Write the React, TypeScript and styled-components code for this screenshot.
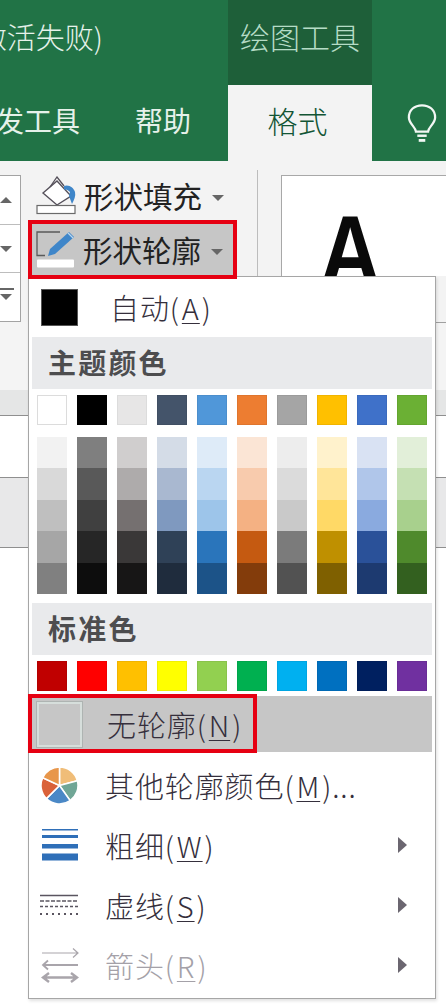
import React from 'react';
import styled, { createGlobalStyle } from 'styled-components';

const Global = createGlobalStyle`
  html, body { margin: 0; padding: 0; background: #fff; }
  * { box-sizing: border-box; }
`;

const Page = styled.div`
  position: relative;
  width: 446px;
  height: 1008px;
  overflow: hidden;
  background: #fff;
  font-family: "Noto Sans CJK SC", "Liberation Sans", sans-serif;
`;

const TitleBar = styled.div`
  display: flex;
  height: 85px;
  background: #217346;
`;

const TitleLeft = styled.div`
  width: 228px;
  display: flex;
  justify-content: flex-end;
  align-items: center;
  padding: 0 125px 13px 0;
  overflow: hidden;
  white-space: nowrap;
  font-size: 29px;
  font-weight: 300;
  color: #e6f2eb;
`;

const ContextTab = styled.div`
  width: 144px;
  display: flex;
  justify-content: center;
  align-items: center;
  padding-bottom: 13px;
  background: #1e5f39;
  font-size: 30px;
  font-weight: 300;
  color: #b5dcc6;
  white-space: nowrap;
`;

const TabBar = styled.div`
  display: flex;
  height: 76px;
  background: #217346;
`;

const TabGroup = styled.div`
  width: 228px;
  display: flex;
  justify-content: flex-end;
  align-items: center;
  gap: 55px;
  padding: 0 37px 6px 0;
  overflow: hidden;
  white-space: nowrap;
`;

const TabLabel = styled.span`
  font-size: 28px;
  color: #e6f1ea;
  flex: none;
`;

const ActiveTab = styled.div`
  width: 144px;
  display: flex;
  justify-content: center;
  align-items: center;
  padding: 0 5px 6px 0;
  background: #f3f3f3;
  font-size: 30px;
  font-weight: 300;
  color: #125535;
`;

const BulbSlot = styled.div`
  flex: 1;
  display: flex;
  justify-content: center;
  align-items: center;
  padding: 1px 0 0 25px;
`;

const Ribbon = styled.div`
  display: flex;
  height: 161px;
  background: #f3f3f3;
`;

const Gallery = styled.div`
  width: 21px;
  height: 147px;
  margin-top: 14px;
  flex: none;
  display: flex;
  flex-direction: column;
  background: #fff;
  border: solid #a3a3a3;
  border-width: 1px 1px 1px 0;
`;

const GalleryCell = styled.div<{ $last?: boolean }>`
  flex: 1;
  display: flex;
  align-items: center;
  justify-content: flex-start;
  border-bottom: ${(p) => (p.$last ? 'none' : '1px solid #bdbdbd')};
`;

const ShapeColumn = styled.div`
  width: 209px;
  margin-left: 7px;
  padding-top: 11px;
  flex: none;
  display: flex;
  flex-direction: column;
`;

const ShapeButton = styled.div<{ $active?: boolean }>`
  position: relative;
  z-index: 3;
  flex: none;
  display: flex;
  align-items: center;
  height: ${(p) => (p.$active ? '59px' : '48px')};
  padding-left: ${(p) => (p.$active ? '3px' : '8px')};
  background: ${(p) => (p.$active ? '#c6c6c6' : 'transparent')};
  border: ${(p) => (p.$active ? '4px solid #e60012' : 'none')};
`;

const ShapeLabel = styled.span`
  font-size: 29.5px;
  line-height: 1;
  color: #222;
  margin-left: 6px;
  white-space: nowrap;
`;

const Caret = styled.span`
  width: 0;
  height: 0;
  margin-left: 10px;
  margin-top: 4px;
  border-left: 6px solid transparent;
  border-right: 6px solid transparent;
  border-top: 6px solid #666;
`;

const Separator = styled.div`
  width: 1px;
  height: 106px;
  margin: 9px 23px 0 20px;
  background: #bcbcbc;
  flex: none;
`;

const Preview = styled.div`
  flex: 1;
  height: 101px;
  margin-top: 14px;
  overflow: hidden;
  background: #fff;
  border: solid #a8a8a8;
  border-width: 1px 0 0 1px;
  display: flex;
  justify-content: flex-start;
  padding-left: 32px;
`;

const PreviewGlyph = styled.span`
  display: inline-block;
  font-family: "Liberation Sans", sans-serif;
  font-size: 100px;
  font-weight: 700;
  line-height: 1;
  margin-top: 25px;
  height: 100px;
  color: #0a0a0a;
  transform: scaleX(0.85);
`;

const Strip = styled.div<{ $h: number; $bg: string; $line?: boolean; $edge?: boolean }>`
  position: relative;
  height: ${(p) => p.$h}px;
  background: ${(p) => p.$bg};
  border-bottom: ${(p) => (p.$line ? '1px solid #8f8f8f' : 'none')};
  ${(p) =>
    p.$edge
      ? `&::before { content: ''; position: absolute; top: 0; right: 0; width: 12px; height: 1px; background: #a0a0a0; }`
      : ''}
`;

const Menu = styled.div`
  position: absolute;
  z-index: 2;
  left: 28px;
  top: 276px;
  width: 408px;
  height: 723px;
  display: flex;
  flex-direction: column;
  padding: 0 3px;
  background: #fff;
  border: 1px solid #a6a6a6;
  box-shadow: 1px 2px 3px rgba(0, 0, 0, 0.12);
`;

const Row = styled.div<{ $h?: number; $muted?: boolean; $hot?: boolean; $top?: number }>`
  position: relative;
  flex: none;
  display: flex;
  align-items: center;
  height: ${(p) => p.$h ?? 60}px;
  margin-top: ${(p) => p.$top ?? 0}px;
  padding-right: 25px;
  background: ${(p) => (p.$hot ? '#c6c6c6' : 'transparent')};
  color: ${(p) => (p.$muted ? '#a4a1a8' : '#352f3c')};
  font-size: 29px;
  font-weight: 300;
  white-space: nowrap;
`;

const IconSlot = styled.div<{ $w?: number }>`
  width: ${(p) => p.$w ?? 73}px;
  flex: none;
  display: flex;
  align-items: center;
  padding-left: 8px;
`;

const AutoSwatch = styled.div`
  width: 37px;
  height: 37px;
  margin-left: 1px;
  background: #000;
  border: 1px solid #555;
`;

const EmptySwatch = styled.div`
  width: 45px;
  height: 45px;
  margin-left: -3px;
  background: #c6c6c6;
  border: 2px solid #d6dedb;
  outline: 1px solid #aeb4b2;
`;

const Label = styled.span`
  letter-spacing: 0.9px;
  line-height: 1;
  & > u {
    padding: 0 2px;
    text-underline-offset: 3px;
    text-decoration-thickness: 1px;
  }
`;

const SubArrow = styled.span`
  margin-left: auto;
  width: 0;
  height: 0;
  border-top: 8px solid transparent;
  border-bottom: 8px solid transparent;
  border-left: 9px solid #6b6670;
`;

const Header = styled.div<{ $top?: number }>`
  flex: none;
  height: 52px;
  margin-top: ${(p) => p.$top ?? 0}px;
  display: flex;
  align-items: center;
  padding: 0 0 3px 16px;
  background: #e9eaec;
  color: #4d4d4f;
  font-size: 28px;
  font-weight: 700;
  letter-spacing: 2.2px;
`;

const SwatchRow = styled.div<{ $top: number; $h: number }>`
  flex: none;
  display: grid;
  grid-template-columns: repeat(10, 30px);
  column-gap: 10px;
  height: ${(p) => p.$h}px;
  margin-top: ${(p) => p.$top}px;
  padding-left: 5px;
`;

const Swatch = styled.div<{ $c: string; $ring?: boolean }>`
  background: ${(p) => p.$c};
  border: 1px solid ${(p) => (p.$ring ? '#dcdcdc' : 'rgba(0,0,0,0.06)')};
`;

const TintColumn = styled.div`
  display: flex;
  flex-direction: column;
`;

const Tint = styled.div<{ $c: string }>`
  flex: 1;
  background: ${(p) => p.$c};
`;

const RedFrame = styled.div`
  position: absolute;
  left: -4px;
  top: -2px;
  width: 229px;
  height: 59px;
  border: 4px solid #e60012;
  pointer-events: none;
`;

const Nudge = styled.div`
  display: flex;
  margin-left: 2px;
`;

const theme = [
  ['#ffffff', true], ['#000000'], ['#e7e6e6', true], ['#44546a'], ['#5097d9'],
  ['#ed7d31'], ['#a5a5a5'], ['#ffc000'], ['#3f71c9'], ['#6bb034'],
] as [string, boolean?][];

const tints = [
  ['#f2f2f2', '#d9d9d9', '#bfbfbf', '#a6a6a6', '#808080'],
  ['#7f7f7f', '#595959', '#404040', '#262626', '#0d0d0d'],
  ['#d0cece', '#aeabab', '#757070', '#3a3838', '#171616'],
  ['#d4dce7', '#a9b8d0', '#7f99bf', '#2f4157', '#1f2c3d'],
  ['#deebf8', '#bad6f1', '#9dc5ea', '#2a75bb', '#1c5388'],
  ['#fbe5d5', '#f8cbad', '#f4b183', '#c55a11', '#833c0b'],
  ['#ededed', '#dbdbdb', '#c9c9c9', '#7b7b7b', '#525252'],
  ['#fff2cc', '#ffe599', '#ffd966', '#bf9000', '#7f6000'],
  ['#d9e2f3', '#b0c6ea', '#8aaadf', '#2a5199', '#1d3a70'],
  ['#e2efd9', '#c5e0b3', '#a8d08d', '#4f8a2c', '#33601f'],
];

const standard = ['#c00000', '#ff0000', '#ffc000', '#ffff00', '#92d050', '#00b050', '#00b0f0', '#0070c0', '#002060', '#7030a0'];

const Bulb = () => (
  <svg width="30" height="42" viewBox="0 0 32 44" fill="none" stroke="#f2f7f4" strokeWidth="2.4">
    <path d="M9.5 30 C9 25 2 21.5 2 15 C2 7 8 2 16 2 C24 2 30 7 30 15 C30 21.5 23 25 22.5 30 Z" />
    <path d="M11 34.5 H21" strokeWidth="2.6" />
    <path d="M12.5 39.5 H19.5" strokeWidth="3" />
  </svg>
);

const FillIcon = () => (
  <svg width="42" height="40" viewBox="0 0 42 40" fill="none">
    <path d="M7 17 L21 5 L35 20 L21 29 Z" fill="#fff" stroke="#55505a" strokeWidth="1.4" />
    <path d="M14 11 L21 1 L28 10" stroke="#55505a" strokeWidth="1.3" />
    <path d="M28 10 C33 8 38 12 39 16 C40 20 38 24 36 28 L33 20 L34 16 C32 14 30 13 28 14 Z" fill="#3f86c9" />
    <rect x="1" y="29.5" width="38" height="8" fill="#fff" stroke="#6a6a6a" strokeWidth="1.2" />
  </svg>
);

const PenIcon = () => (
  <svg width="42" height="40" viewBox="0 0 42 40" fill="none">
    <path d="M25 2 H2 V25.5 H10" stroke="#5a5a5a" strokeWidth="1.3" />
    <path d="M13 26 L15 19 L34 2 L39 7 L20 24 Z" fill="#3f86c9" />
    <path d="M33 3 L38 8" stroke="#bcd7ee" strokeWidth="1.2" />
    <rect x="2" y="29.5" width="37" height="8" rx="1" fill="#fff" />
  </svg>
);

const wedge = (a: number, b: number) => {
  const r = 19;
  const p = (d: number) => {
    const t = ((d - 90) * Math.PI) / 180;
    return `${20 + r * Math.cos(t)} ${20 + r * Math.sin(t)}`;
  };
  return `M20 20 L${p(a)} A${r} ${r} 0 0 1 ${p(b)} Z`;
};

const PieIcon = () => (
  <svg width="39" height="39" viewBox="0 0 40 40" stroke="#fff" strokeWidth="1.6">
    <path d={wedge(0, 75)} fill="#f0bd78" />
    <path d={wedge(75, 145)} fill="#70a696" />
    <path d={wedge(145, 225)} fill="#4a88c6" />
    <path d={wedge(225, 295)} fill="#da623a" />
    <path d={wedge(295, 360)} fill="#e8964a" />
  </svg>
);

const WeightIcon = () => (
  <svg width="36" height="32" viewBox="0 0 36 32" fill="#2f6fb8">
    <rect x="0" y="0" width="36" height="1.5" />
    <rect x="0" y="6" width="36" height="3" />
    <rect x="0" y="15" width="36" height="4.5" />
    <rect x="0" y="24.5" width="36" height="7" />
  </svg>
);

const DashIcon = () => (
  <svg width="38" height="22" viewBox="0 0 38 22" fill="none" stroke="#5a5560" strokeWidth="1.4">
    <path d="M0 1.5 H38" />
    <path d="M0 7 H38" strokeDasharray="4 1.5" />
    <path d="M0 12.5 H38" strokeDasharray="3 2" />
    <path d="M0 20 H38" strokeWidth="2" strokeDasharray="2 4" />
  </svg>
);

const ArrowsIcon = () => (
  <svg width="40" height="36" viewBox="0 0 40 36" fill="none" stroke="#a9a5ab">
    <path d="M2 6 H38 M33 1.5 L38 6 L33 10.5" strokeWidth="1.2" />
    <path d="M38 18 H3 M8 13.5 L3 18 L8 22.5" strokeWidth="1.8" />
    <path d="M4 30.5 H36 M9 26 L3 30.5 L9 35 M31 26 L37 30.5 L31 35" strokeWidth="2.4" />
  </svg>
);

const Tri = styled.span<{ $down?: boolean; $bar?: boolean }>`
  position: relative;
  width: 0;
  height: 0;
  border-left: 6px solid transparent;
  border-right: 6px solid transparent;
  ${(p) => (p.$down ? 'border-top: 6px solid #666;' : 'border-bottom: 6px solid #666;')}
  ${(p) =>
    p.$bar
      ? `&::before { content: ''; position: absolute; left: -6px; top: -12px; width: 14px; height: 2px; background: #666; }`
      : ''}
`;

export default function App() {
  return (
    <Page>
      <Global />
      <TitleBar>
        <TitleLeft>(激活失败)</TitleLeft>
        <ContextTab>绘图工具</ContextTab>
      </TitleBar>
      <TabBar>
        <TabGroup>
          <TabLabel>开发工具</TabLabel>
          <TabLabel>帮助</TabLabel>
        </TabGroup>
        <ActiveTab>格式</ActiveTab>
        <BulbSlot>
          <Bulb />
        </BulbSlot>
      </TabBar>
      <Ribbon>
        <Gallery>
          <GalleryCell><Tri /></GalleryCell>
          <GalleryCell><Tri $down /></GalleryCell>
          <GalleryCell $last><Tri $down $bar /></GalleryCell>
        </Gallery>
        <ShapeColumn>
          <ShapeButton>
            <FillIcon />
            <ShapeLabel>形状填充</ShapeLabel>
            <Caret />
          </ShapeButton>
          <ShapeButton $active>
            <PenIcon />
            <ShapeLabel>形状轮廓</ShapeLabel>
            <Caret />
          </ShapeButton>
        </ShapeColumn>
        <Separator />
        <Preview>
          <PreviewGlyph>A</PreviewGlyph>
        </Preview>
      </Ribbon>
      <Strip $h={68} $bg="#f4f4f4" $edge />
      <Strip $h={26} $bg="#e5e6e6" $line />
      <Strip $h={62} $bg="#ffffff" $line />
      <Strip $h={70} $bg="#e8e8e9" $line />

      <Menu>
        <Row>
          <IconSlot $w={78}><AutoSwatch /></IconSlot>
          <Label>自动(<u>A</u>)</Label>
        </Row>
        <Header>主题颜色</Header>
        <SwatchRow $top={6} $h={30}>
          {theme.map(([c, ring]) => (
            <Swatch key={c} $c={c} $ring={ring} />
          ))}
        </SwatchRow>
        <SwatchRow $top={12} $h={157}>
          {tints.map((col) => (
            <TintColumn key={col[0]}>
              {col.map((c) => (
                <Tint key={c} $c={c} />
              ))}
            </TintColumn>
          ))}
        </SwatchRow>
        <Header $top={9}>标准色</Header>
        <SwatchRow $top={6} $h={30}>
          {standard.map((c) => (
            <Swatch key={c} $c={c} />
          ))}
        </SwatchRow>
        <Row $h={56} $hot $top={5}>
          <IconSlot $w={75}><EmptySwatch /></IconSlot>
          <Label>无轮廓(<u>N</u>)</Label>
          <RedFrame />
        </Row>
        <Row $top={3}>
          <IconSlot><PieIcon /></IconSlot>
          <Label>其他轮廓颜色(<u>M</u>)...</Label>
        </Row>
        <Row>
          <IconSlot><Nudge><WeightIcon /></Nudge></IconSlot>
          <Label>粗细(<u>W</u>)</Label>
          <SubArrow />
        </Row>
        <Row>
          <IconSlot><DashIcon /></IconSlot>
          <Label>虚线(<u>S</u>)</Label>
          <SubArrow />
        </Row>
        <Row $muted>
          <IconSlot><ArrowsIcon /></IconSlot>
          <Label>箭头(<u>R</u>)</Label>
          <SubArrow />
        </Row>
      </Menu>
    </Page>
  );
}
